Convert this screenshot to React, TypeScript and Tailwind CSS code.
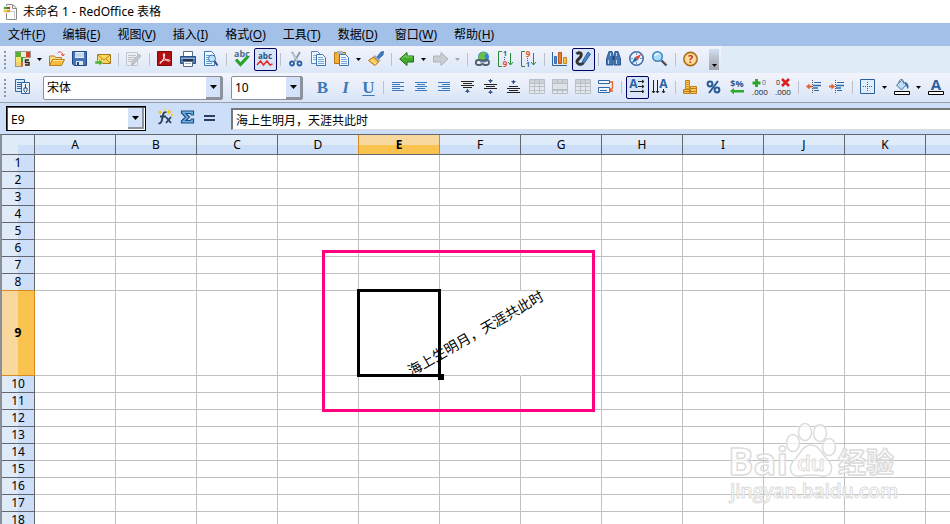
import type { ReactNode } from "react";
import clsx from "clsx";

const menus = [
  ["文件", "F"],
  ["编辑", "E"],
  ["视图", "V"],
  ["插入", "I"],
  ["格式", "O"],
  ["工具", "T"],
  ["数据", "D"],
  ["窗口", "W"],
  ["帮助", "H"],
];

const columns = ["A", "B", "C", "D", "E", "F", "G", "H", "I", "J", "K"];
const rows = Array.from({ length: 18 }, (_, i) => i + 1);

const tableIcon = (
  <>
    <path d="M.5.5h15v14H.5z" fill="#e4e7ec" stroke="#b9bfc9" />
    <path d="M1 1h14v3H1z" fill="#cdd1d8" />
    <path d="M1 4.500h14M1 7.500h14M1 11.500h14M5.500 1v14M10.500 1v14" stroke="#b9bfc9" fill="none" />
  </>
);

const icons: Record<string, ReactNode> = {
  new: (
    <>
      <path d="M0 0h16v16H0z" fill="#9a9a90" />
      <path d="M1 1h5v5H1z" fill="#5cae35" />
      <path d="M6 1h5v5H6z" fill="#e8efd8" />
      <path d="M11 1h4v5h-4z" fill="#d8402c" />
      <path d="M1 6h5v5H1z" fill="#f3e66a" />
      <path d="M6 6h4v5H6z" fill="#3a9a3a" />
      <path d="M10 6h5v3h-5z" fill="#f08a5c" />
      <path d="M1 11h5v4H1z" fill="#f0d070" />
      <path d="M6 11h3v4H6z" fill="#e06030" />
      <path d="M8 7h8v9H8z" fill="#e8e8e8" />
      <path d="M14 9h-3.500v2.500H14V14h-4" fill="none" stroke="#222" strokeWidth="1.400" />
    </>
  ),
  open: (
    <>
      <path d="M.5 14.500V5h5l1 1.500h6V9" fill="#f7dc8a" stroke="#b9801c" />
      <path d="M.5 14.500 3.500 8.500h12l-3 6z" fill="#f5bb3d" stroke="#b9801c" />
      <path d="M4 9.500h10" stroke="#fde6a4" />
      <path d="M8.500 2c2-2 5-1.500 5.500 2.500m-2-1.500 2 2 1.500-2" fill="none" stroke="#e0503c" />
    </>
  ),
  save: (
    <>
      <path d="M.5.5h14v14H2L.5 13z" fill="#4275b8" stroke="#244a86" />
      <path d="M3 1h9v6H3z" fill="#e6eef8" />
      <path d="M3 3h9M3 5h9" stroke="#a9c0dd" />
      <path d="M4 10h7v4H4z" fill="#dfe6f0" />
      <path d="M5 11h2v3H5z" fill="#244a86" />
    </>
  ),
  mail: (
    <>
      <path d="M2.500 3.500h13v9h-13z" fill="#fbd75c" stroke="#a5781c" />
      <path d="m3 4 6 5 6-5M3 12l4-4m8 4-4-4" fill="none" stroke="#b98a2c" />
      <path d="M0 10h4V8l4 3.500L4 15v-2H0z" fill="#4fae35" stroke="#e8f4e0" strokeWidth=".5" />
    </>
  ),
  edit: (
    <>
      <path d="M.5 1.500h11v13H.5z" fill="#eceef1" stroke="#c2c6cd" />
      <path d="M2 4.500h8M2 6.500h8M2 8.500h6M2 10.500h4" stroke="#bcc1c9" />
      <path d="m13 3 2 2-7 8-2.500 1 .5-3z" fill="#c4c7cc" stroke="#a8acb3" strokeWidth=".7" />
    </>
  ),
  pdf: (
    <>
      <path d="M.5.5h14v14H.5z" fill="#b40f10" stroke="#7d0a0a" />
      <path
        d="M3 12.500c2-1 5-7 4.500-9.500-1-1-1.500 0-1 2 1 3 4 6 6 5 1-1-1-1.500-3-1.300-2.500.3-5.500 1.300-6.500 2.800z"
        fill="none"
        stroke="#fff"
      />
    </>
  ),
  print: (
    <>
      <path d="M3.500.5h9v6h-9z" fill="#fff" stroke="#5a6b82" />
      <path d="M.5 5.500h15v7H.5z" fill="#4b7cb8" stroke="#284f83" />
      <path d="M1 7.500h14" stroke="#93b4dc" />
      <path d="M3 8h10v2H3z" fill="#24364f" />
      <path d="M3.500 10.500h9v5h-9z" fill="#fff" stroke="#5a6b82" />
      <path d="M5 12.500h6" stroke="#9db0c9" />
    </>
  ),
  preview: (
    <>
      <path d="M1.500.5h7l3 3v11h-10z" fill="#f4f9ff" stroke="#3f78b8" />
      <path d="M3 4.500h4M3 6.500h3M3 8.500h3M3 10.500h4M3 12.500h6" stroke="#6b9cd0" />
      <circle cx="9" cy="7.500" r="3.500" fill="#bfe2f8" stroke="#3f78b8" />
      <path d="m11.500 10 3 4.500" stroke="#34567f" strokeWidth="2" />
    </>
  ),
  spell: (
    <>
      <text x="8" y="6" textAnchor="middle" fontSize="9" fontWeight="700" fill="#4d6d90">abc</text>
      <path d="m2 8.500 4.500 5L14 5.500" fill="none" stroke="#27a527" strokeWidth="3.200" />
    </>
  ),
  autospell: (
    <>
      <text x="8" y="8" textAnchor="middle" fontSize="8" fontWeight="700" fill="#27507f">abc</text>
      <path d="m0 14 3.500-4 3 4L10 10l3 4 2.500-1" fill="none" stroke="#e02b2b" strokeWidth="1.500" />
    </>
  ),
  cut: (
    <>
      <path d="m4 1 6 10M12 1 6 11" stroke="#8d9bab" strokeWidth="2" />
      <path d="m4.500 2 5 8" stroke="#dfe6ee" />
      <circle cx="4" cy="12.500" r="2" fill="none" stroke="#2d62a8" strokeWidth="1.800" />
      <circle cx="11.500" cy="12.500" r="2" fill="none" stroke="#2d62a8" strokeWidth="1.800" />
    </>
  ),
  copy: (
    <>
      <path d="M.5.5h6l3 3v9h-9z" fill="#f2f8ff" stroke="#5287c4" />
      <path d="M2 4.500h4M2 6.500h4M2 8.500h4" stroke="#8ab0dc" />
      <path d="M5.500 3.500h6l3 3v8h-9z" fill="#f2f8ff" stroke="#3c74b5" />
      <path d="M7 6.500h5M7 8.500h6M7 10.500h6M7 12.500h6" stroke="#78a4d6" />
    </>
  ),
  paste: (
    <>
      <path d="M.5 1.500h11v11H.5z" fill="#f3b13a" stroke="#b67a1a" />
      <path d="M3 0h6v3H3z" fill="#aab5c4" />
      <path d="M5.500 3.500h6l3 3v8h-9z" fill="#f2f8ff" stroke="#3c74b5" />
      <path d="M7 6.500h5M7 8.500h6M7 10.500h6M7 12.500h6" stroke="#78a4d6" />
    </>
  ),
  brush: (
    <>
      <path d="m9 6 4-5 2.500-.5L15 4l-4.500 4z" fill="#3f7fc6" stroke="#1f4e8c" strokeWidth=".7" />
      <path d="m7 4.500 5 5-1.500 1.500L5.500 6z" fill="#a9b6c6" stroke="#60758f" strokeWidth=".5" />
      <path d="m5.500 6 5 5L7 14.500.5 9.500z" fill="#fbc84a" stroke="#b8691c" />
      <path d="m3 9 5 4" stroke="#fff0a0" />
    </>
  ),
  back: (
    <>
      <path d="M.7 8 8 1.500V5h6.500v6H8v3.500z" fill="#43ab2c" stroke="#1e6b17" />
      <path d="M3 7.500 7 4v2h6.500" fill="none" stroke="#8fd86c" />
    </>
  ),
  forward: <path d="M15 8 8 1.500V5H.5v6H8v3.500z" fill="#cacdd2" stroke="#adb1b8" />,
  link: (
    <>
      <circle cx="8.500" cy="6" r="5.500" fill="#2d86d8" />
      <path d="M4 4c2-3 5-4 8-2l-3 3 2 2-4 3-4-2z" fill="#6bc043" />
      <rect x=".8" y="9" width="6.500" height="5" rx="2.500" fill="none" stroke="#555f6b" strokeWidth="1.800" />
      <rect x="7.500" y="9" width="6.500" height="5" rx="2.500" fill="none" stroke="#555f6b" strokeWidth="1.800" />
      <path d="M5 11.500h5" stroke="#aab2bc" strokeWidth="1.500" />
    </>
  ),
  sortUp: (
    <>
      <path d="M4 .5H.5v15H4" fill="none" stroke="#2c8a3a" />
      <text x="7" y="5" textAnchor="middle" fontSize="7" fontWeight="700" fill="#2c5f9e">1</text>
      <path d="M6.500 6v4" stroke="#2c5f9e" strokeDasharray="1 1" />
      <text x="7" y="16" textAnchor="middle" fontSize="8" fontWeight="700" fill="#e0502c">9</text>
      <path d="M12.500 2v12m-2.500-3 2.500 3 2.500-3" fill="none" stroke="#2c8a3a" />
    </>
  ),
  sortDown: (
    <>
      <path d="M4 .5H.5v15H4" fill="none" stroke="#2c8a3a" />
      <text x="7" y="6" textAnchor="middle" fontSize="8" fontWeight="700" fill="#e0502c">9</text>
      <path d="M6.500 7v3" stroke="#2c5f9e" strokeDasharray="1 1" />
      <text x="7" y="16" textAnchor="middle" fontSize="7" fontWeight="700" fill="#2c5f9e">1</text>
      <path d="M12.500 2v12m-2.500-3 2.500 3 2.500-3" fill="none" stroke="#2c8a3a" />
    </>
  ),
  chart: (
    <>
      <path d="M.5 1v13.500H15" fill="none" stroke="#2f5f9c" />
      <path d="M2.500 5.500h2v7h-2z" fill="#4f93dc" stroke="#2f6cb0" />
      <path d="M6.500 1.500h3v11h-3z" fill="#f07d26" stroke="#b9541a" />
      <path d="M11.500 6.500h3v6h-3z" fill="#fac53d" stroke="#c28a1c" />
    </>
  ),
  draw: (
    <>
      <path d="M1.500 3C4 .5 7 2 6 5s-4.500 3.500-4 6 3.500 3 6 1.500" fill="none" stroke="#333" strokeWidth="3" />
      <path d="m13 1 2.500 2L9.500 12l-3 2 1-4z" fill="#4785cb" stroke="#1e4f8f" strokeWidth=".8" />
      <path d="m6.500 14 1-3 2 1.500z" fill="#333" />
    </>
  ),
  find: (
    <>
      <path d="M3 .5h3l1 4v9.500H.5V8z" fill="#4478b2" stroke="#28568d" />
      <path d="M12 .5H9l-1 4v9.500h6.500V8z" fill="#4478b2" stroke="#28568d" />
      <path d="M6.500 5h2v4h-2z" fill="#244a7c" />
      <path d="M2.500 9v4M10.500 9v4M4.500 2v3M10.500 2v3" stroke="#b5d2ef" />
    </>
  ),
  navigator: (
    <>
      <circle cx="7.500" cy="7.500" r="6.700" fill="#e8f3fd" stroke="#3f6fa9" strokeWidth="1.600" />
      <path d="M7.500 2v2m0 7v2M2 7.500h2m7 0h2" stroke="#6f95c2" />
      <path d="M12.500 3 9 9 6 6z" fill="#e14a30" />
      <path d="M2.500 12.500 6 6l3 3z" fill="#2f66ae" />
    </>
  ),
  zoom: (
    <>
      <circle cx="5.500" cy="5.500" r="4.800" fill="#a9dcf8" stroke="#3e84c4" strokeWidth="1.500" />
      <path d="M3 5c1-2 3-2.500 4-2" fill="none" stroke="#fff" strokeWidth="1.200" />
      <path d="m9.500 9.500 5 5" stroke="#4a4f57" strokeWidth="2.400" />
    </>
  ),
  help: (
    <>
      <circle cx="7.500" cy="8" r="6.700" fill="#fbc766" stroke="#a56a1a" strokeWidth="1.400" />
      <circle cx="7.500" cy="8" r="5" fill="#fde0a0" />
      <text x="7.500" y="12" textAnchor="middle" fontSize="11" fontWeight="700" fill="#c0382b">?</text>
    </>
  ),
  styles: (
    <>
      <path d="M.5.5h9v12h-9z" fill="#dcebfb" stroke="#2f66a8" />
      <path d="M2 3.500h6M2 5.500h6M2 7.500h5M2 9.500h5" stroke="#2f66a8" />
      <path d="M6.500 3.500h8v11h-8z" fill="#e9f3fd" stroke="#2f66a8" />
      <path d="M10.500 5v4m-1.500 0h3v3l-1.500 1.500L9 12z" fill="#fff" stroke="#274f80" />
    </>
  ),
  alignLeft: <path d="M1 3.500h12M1 5.500h8M1 7.500h12M1 9.500h8M1 11.500h12" stroke="#3a7bc0" />,
  alignCenter: <path d="M1 3.500h12M3 5.500h8M1 7.500h12M3 9.500h8M1 11.500h12" stroke="#3a7bc0" />,
  alignRight: <path d="M1 3.500h12M5 5.500h8M1 7.500h12M5 9.500h8M1 11.500h12" stroke="#3a7bc0" />,
  alignTop: (
    <>
      <path d="M1 2.500h13M3 4.500h9M1 6.500h13M3 8.500h9" stroke="#222" />
      <path d="M7.500 10v4" stroke="#36568a" />
      <path d="m5 13 2.500-3 2.500 3z" fill="#36568a" />
    </>
  ),
  alignMiddle: (
    <>
      <path d="M1 5.500h13M3 7.500h9M1 9.500h13" stroke="#222" />
      <path d="M7.500 0v4M7.500 11v4" stroke="#36568a" />
      <path d="m5 1 2.500 3L10 1zm0 13 2.500-3 2.500 3z" fill="#36568a" />
    </>
  ),
  alignBottom: (
    <>
      <path d="M3 7.500h9M1 9.500h13M3 11.500h9M1 13.500h13" stroke="#222" />
      <path d="M7.500 1v4" stroke="#36568a" />
      <path d="m5 2 2.500 3L10 2z" fill="#36568a" />
    </>
  ),
  merge: tableIcon,
  split: (
    <>
      {tableIcon}
      <path d="M.5 4.500h15v6H.5z" fill="#dfe2e7" stroke="#b9bfc9" />
    </>
  ),
  table: tableIcon,
  wrap: (
    <>
      <path d="M.5 1.500h11v3H.5zM.5 8.500h11v5H.5z" fill="#f0f6fe" stroke="#2f66a8" />
      <path d="M2 11.500h7" stroke="#2f66a8" />
      <path d="M12 3h2.500v6L12 12m0-3v3h3" fill="none" stroke="#e8662c" strokeWidth="1.300" />
    </>
  ),
  textHorizontal: (
    <>
      <text x="4.500" y="9" textAnchor="middle" fontSize="12" fontWeight="700" fill="#2a62a6">A</text>
      <path d="M9 2.500h6M9 7.500h6M1 12.500h14M13 1l2 1.500L13 4m0 2 2 1.500L13 9m0 2 2 1.500-2 1.500" fill="none" stroke="#222" />
    </>
  ),
  textVertical: (
    <>
      <text x="11.500" y="9" textAnchor="middle" fontSize="12" fontWeight="700" fill="#2a62a6">A</text>
      <path d="M1.500 1v13m4-13v13m6-4v4M0 12l1.500 2L3 12m1 0 1.500 2L7 12m3 0 1.500 2 1.500-2" fill="none" stroke="#222" />
    </>
  ),
  currency: (
    <>
      <path d="M2.500 1.500h4v12h-4z" fill="#fbc650" stroke="#bf7e1d" />
      <path d="M2 3.500h5M2 5.500h5M2 7.500h5M2 9.500h5" stroke="#d9982c" />
      <path d="M7.500 7.500h6v7h-6zM.5 10.500h6v4h-6z" fill="#fbc650" stroke="#bf7e1d" />
      <path d="M7 9.500h7M1 12.500h13" stroke="#bf7e1d" />
    </>
  ),
  percent: (
    <>
      <circle cx="4" cy="5" r="2.400" fill="none" stroke="#285a97" strokeWidth="2" />
      <circle cx="11" cy="11" r="2.400" fill="none" stroke="#285a97" strokeWidth="2" />
      <path d="M12 2 3 14" stroke="#285a97" strokeWidth="2" />
    </>
  ),
  standard: (
    <>
      <text x="8" y="8" textAnchor="middle" fontSize="9" fontWeight="700" fill="#285a97">$%</text>
      <path d="M1 12 5 9v2h10v2.500H5v2z" fill="#2bad2b" />
    </>
  ),
  addDecimal: (
    <>
      <path d="M4.500 0v8M.5 4h8" stroke="#2aa52a" strokeWidth="2.800" />
      <text x="12" y="6" textAnchor="middle" fontSize="7" fill="#3a6ea8">0</text>
      <text x="8" y="16" textAnchor="middle" fontSize="8" fill="#222">.000</text>
    </>
  ),
  deleteDecimal: (
    <>
      <text x="3" y="6" textAnchor="middle" fontSize="7" fill="#222">0</text>
      <path d="m7 0 7 7m0-7L7 7" stroke="#d8201c" strokeWidth="2.600" />
      <text x="8" y="16" textAnchor="middle" fontSize="8" fill="#222">.000</text>
    </>
  ),
  outdent: (
    <>
      <path d="M8 3.500h7M8 11.500h5" stroke="#2d6bab" />
      <path d="M7 6.500h8M7 9h5" stroke="#2d6bab" strokeWidth="1.600" />
      <path d="M6.500 1v14" stroke="#555" strokeDasharray="1 1" />
      <path d="m0 7.500 3.500-3v2H6v2H3.500v2z" fill="#e8602c" />
    </>
  ),
  indent: (
    <>
      <path d="M8 3.500h7M8 11.500h5" stroke="#2d6bab" />
      <path d="M7 6.500h8M7 9h5" stroke="#2d6bab" strokeWidth="1.600" />
      <path d="M6.500 1v14" stroke="#555" strokeDasharray="1 1" />
      <path d="m6 7.500-3.500-3v2H0v2h2.500v2z" fill="#e8602c" />
    </>
  ),
  borders: (
    <>
      <path d="M.5.5h14v14H.5z" fill="#dfeefc" stroke="#2c5f9e" />
      <path d="M7.500 3v10M3 7.500h10" stroke="#2c5f9e" strokeDasharray="1 1" />
    </>
  ),
  fill: (
    <>
      <path d="m2.500 6 5-4.500 5 4-5 5.500z" fill="#c6dcf2" stroke="#3a71ac" />
      <path d="M5 4c0-5 5-5 5 1" fill="none" stroke="#5a6f88" />
      <path d="M11 3c4 1 4 5 3 7-1.500-1-1.500-4-3-5z" fill="#2d6cb5" />
      <path d="M.5 12.500h15v3H.5z" fill="#fff" stroke="#000" />
    </>
  ),
  fontColor: (
    <>
      <text x="8" y="11" textAnchor="middle" fontSize="15" fontWeight="700" fill="#2c5f9e">A</text>
      <path d="M.5 12.500h15v3H.5z" fill="#fff" stroke="#000" />
    </>
  ),
  formula: (
    <>
      <path d="M9.500 3.500c-3-1.500-3.500 2-4 5s-1.500 7-4 5.500M3 7.500h6" fill="none" stroke="#27405f" strokeWidth="1.800" />
      <path d="m9 8 5 6m0-6-5 6" stroke="#27405f" strokeWidth="1.800" />
      <path d="m3 1 1 1.500L5.500 3 4 4 3 5.500 2 4 .5 3 2 2.500zm9-1 1 2 2 1-2 1-1 2-1-2-2-1 2-1z" fill="#f6c422" />
      <path d="M14 5h2v2h-2zM7 0h1v1H7z" fill="#f6c422" />
    </>
  ),
  sum: (
    <path
      d="M1.500 2h12v4h-2l-1-1.500H6L9.500 8 6 11.500h4.500l1-1.500h2v4h-12v-2l4-4-4-4z"
      fill="#69b2e6"
      stroke="#1e4d84"
      strokeWidth="1.200"
    />
  ),
  equals: <path d="M1 7h11M1 11h11" stroke="#2b3f5c" strokeWidth="2" />,
};

function Icon({ name }: { name: string }) {
  return (
    <svg viewBox="0 0 16 16" className="size-4 shrink-0 overflow-visible font-['Open_Sans',sans-serif]" aria-hidden="true">
      {icons[name]}
    </svg>
  );
}

function Arrow({ small, muted }: { small?: boolean; muted?: boolean }) {
  return (
    <svg
      viewBox="0 0 7 4"
      className={clsx("shrink-0", small ? "h-[3px] w-[5px]" : "h-1 w-[7px]", muted ? "fill-[#a3a6ab]" : "fill-black")}
      aria-hidden="true"
    >
      <path d="M0 0h7L3.500 4z" />
    </svg>
  );
}

function Tool({ icon, active }: { icon: string; active?: boolean }) {
  return (
    <button
      type="button"
      aria-label={icon}
      aria-pressed={active}
      className={clsx(
        "flex h-[23px] w-[23px] shrink-0 rounded-xs border pt-0.5 pl-0.5",
        active ? "border-[#000060] bg-[#d8e5f8]" : "border-transparent"
      )}
    >
      <Icon name={icon} />
    </button>
  );
}

function StyleTool({ letter, className }: { letter: string; className?: string }) {
  return (
    <button
      type="button"
      className={clsx(
        "h-[23px] w-[23px] shrink-0 text-center font-['Liberation_Serif',serif] text-[17px] leading-[22px] font-bold text-[#3f7ab8]",
        className
      )}
    >
      {letter}
    </button>
  );
}

function Drop({ muted }: { muted?: boolean }) {
  return (
    <button type="button" aria-label="options" className="flex h-[23px] w-[11px] shrink-0 items-center pl-0.5">
      <Arrow small muted={muted} />
    </button>
  );
}

function Sep() {
  return (
    <span className="flex h-[23px] w-2 shrink-0 items-center pl-[3px]">
      <span className="h-[13px] w-px bg-[#bcc0c8]" />
    </span>
  );
}

function Handle() {
  return (
    <span className="flex w-3 shrink-0 flex-col gap-0.5 pt-[3px] pl-1">
      {[0, 1, 2, 3, 4].map((dot) => (
        <span key={dot} className="size-0.5 bg-[#8f949e]" />
      ))}
    </span>
  );
}

function ArrowBox() {
  return (
    <span className="pointer-events-none absolute inset-y-px right-px flex w-4 items-center justify-center border-r-2 border-b-2 border-[#8d949f] bg-[#d3e2f9]">
      <Arrow />
    </span>
  );
}

function Combo({ label, value, className }: { label: string; value: string; className: string }) {
  return (
    <label className={clsx("relative h-6 shrink-0", className)}>
      <select
        aria-label={label}
        className="block h-full w-full appearance-none rounded-xs border border-[#8b9098] bg-white pl-[3px] text-xs outline-none"
      >
        <option>{value}</option>
      </select>
      <ArrowBox />
    </label>
  );
}

function TitleBar() {
  return (
    <header className="flex h-[23px] shrink-0 items-center gap-1.5 bg-white pl-[3px]">
      <svg viewBox="0 0 14 16" className="h-4 w-3.5" aria-hidden="true">
        <path d="M3.500.5h6l4 3.500v11.500h-10z" fill="#fff" stroke="#8a8a8a" />
        <path d="M9.500 1v3.500h4" fill="none" stroke="#8a8a8a" />
        <path d="M5.500 7.500h6v7" fill="none" stroke="#c4c4c4" />
        <path d="M0 2h8v7H0z" fill="#e9e9df" />
        <path d="M1 3h3v2H1z" fill="#50a834" />
        <path d="M4 3h3v2H4z" fill="#d8342c" />
        <path d="M1 6h3v2H1z" fill="#f0cf3c" />
        <path d="M4 6h3v2H4z" fill="#e98d2c" />
      </svg>
      <h1 className="text-xs">未命名 1 - RedOffice 表格</h1>
    </header>
  );
}

function MenuBar() {
  return (
    <nav className="flex h-[23px] shrink-0 items-center bg-[#a3c1e8]">
      {menus.map(([name, key]) => (
        <button key={key} type="button" className="shrink-0 pr-[9px] pl-2 text-xs">
          {name}(<span className="underline underline-offset-2">{key}</span>)
        </button>
      ))}
    </nav>
  );
}

function StandardBar() {
  return (
    <div className="flex h-[27px] shrink-0 overflow-hidden bg-[#dfebf7]">
      <div className="flex shrink-0 items-start bg-linear-to-b from-[#f3f4fb] to-[#dbe7f8] pt-0.5 pr-0.5">
        <Handle />
        <Tool icon="new" />
        <Drop />
        <Tool icon="open" />
        <Tool icon="save" />
        <Tool icon="mail" />
        <Sep />
        <Tool icon="edit" />
        <Sep />
        <Tool icon="pdf" />
        <Tool icon="print" />
        <Tool icon="preview" />
        <Sep />
        <Tool icon="spell" />
        <Tool icon="autospell" active />
        <Sep />
        <Tool icon="cut" />
        <Tool icon="copy" />
        <Tool icon="paste" />
        <Drop />
        <Tool icon="brush" />
        <Sep />
        <Tool icon="back" />
        <Drop />
        <Tool icon="forward" />
        <Drop muted />
        <Sep />
        <Tool icon="link" />
        <Tool icon="sortUp" />
        <Tool icon="sortDown" />
        <Sep />
        <Tool icon="chart" />
        <Tool icon="draw" active />
        <Sep />
        <Tool icon="find" />
        <Tool icon="navigator" />
        <Tool icon="zoom" />
        <Sep />
        <Tool icon="help" />
        <button
          type="button"
          aria-label="more"
          className="mt-px ml-1.5 flex h-[21px] w-2.5 items-end justify-center bg-linear-to-b from-[#cfe0f8] via-[#b9bdc6] to-[#a2a5ab] pb-[3px]"
        >
          <Arrow small />
        </button>
      </div>
    </div>
  );
}

function FormatBar() {
  return (
    <div className="flex h-[30px] shrink-0 items-start overflow-hidden border-b border-[#9aa0aa] bg-linear-to-b from-[#f3f4fb] to-[#d9e5f8] pt-[3px]">
      <Handle />
      <Tool icon="styles" />
      <Combo label="font" value="宋体" className="mx-2 w-[180px]" />
      <Combo label="size" value="10" className="mr-2 w-[72px]" />
      <StyleTool letter="B" />
      <StyleTool letter="I" className="italic" />
      <StyleTool letter="U" className="underline underline-offset-2" />
      <Sep />
      <Tool icon="alignLeft" />
      <Tool icon="alignCenter" />
      <Tool icon="alignRight" />
      <Tool icon="alignTop" />
      <Tool icon="alignMiddle" />
      <Tool icon="alignBottom" />
      <Tool icon="merge" />
      <Tool icon="split" />
      <Tool icon="table" />
      <Tool icon="wrap" />
      <Sep />
      <Tool icon="textHorizontal" active />
      <Tool icon="textVertical" />
      <Sep />
      <Tool icon="currency" />
      <Tool icon="percent" />
      <Tool icon="standard" />
      <Tool icon="addDecimal" />
      <Tool icon="deleteDecimal" />
      <Sep />
      <Tool icon="outdent" />
      <Tool icon="indent" />
      <Sep />
      <Tool icon="borders" />
      <Drop />
      <Tool icon="fill" />
      <Drop />
      <Tool icon="fontColor" />
    </div>
  );
}

function FormulaBar() {
  return (
    <div className="flex h-[31px] shrink-0 items-start bg-[#cddff8] pt-[3px] pl-1.5">
      <label className="relative h-[25px] w-[140px] shrink-0 border border-black">
        <input
          aria-label="cell"
          defaultValue="E9"
          className="block h-full w-full border-t border-l border-[#555] bg-white pl-[3px] text-xs outline-none"
        />
        <ArrowBox />
      </label>
      <div className="mx-2 flex shrink-0">
        <Tool icon="formula" />
        <Tool icon="sum" />
        <Tool icon="equals" />
      </div>
      <input
        aria-label="formula"
        defaultValue="海上生明月，天涯共此时"
        className="mt-0.5 h-[22px] min-w-0 flex-1 border-t-2 border-b border-l-2 border-t-[#777] border-b-[#dcdcdc] border-l-[#777] bg-white pl-[3px] text-xs outline-none"
      />
    </div>
  );
}

function Cell({ row, col }: { row: number; col: string }) {
  const selected = row === 9 && col === "E";
  return (
    <td
      className={clsx(
        "relative border-r border-b border-[#c0c0c0] p-0",
        row === 9 && col === "F" && "border-r-transparent"
      )}
    >
      {selected && (
        <>
          <span className="absolute -bottom-0.5 left-[53px] z-10 origin-bottom-left -rotate-30 font-['Noto_Sans_CJK_SC',sans-serif] text-sm leading-[14px] whitespace-nowrap">
            海上生明月，天涯共此时
          </span>
          <span className="absolute -inset-0.5 z-20 border-3 border-black" />
          <span className="absolute -right-[5px] -bottom-[5px] z-20 size-1.5 bg-black" />
        </>
      )}
    </td>
  );
}

function Sheet() {
  return (
    <table className="w-full table-fixed border-separate border-spacing-0 text-center text-xs leading-4">
      <colgroup>
        <col className="w-[33px]" />
        {columns.map((col) => (
          <col key={col} className="w-[81px]" />
        ))}
        <col />
      </colgroup>
      <thead>
        <tr className="h-5">
          <td className="border-r border-b border-[#62676f] bg-[#e0ebf9] p-0">
            <div className="mt-2.5 ml-4 h-[9px] bg-[#cddff8]" />
          </td>
          {columns.map((col) => (
            <th
              key={col}
              className={clsx(
                "border-r border-b p-0",
                col === "E"
                  ? "border-[#d98a1e] border-b-[#62676f] bg-linear-to-b from-[#f9d8a0] from-50% to-[#fac350] to-50% font-bold"
                  : "border-[#62676f] bg-linear-to-b from-[#e0ebf9] from-50% to-[#cddff8] to-50% font-normal",
                col === "D" && "border-r-[#d98a1e]"
              )}
            >
              {col}
            </th>
          ))}
          <th className="border-b border-[#62676f] bg-linear-to-b from-[#e0ebf9] from-50% to-[#cddff8] to-50% p-0" />
        </tr>
      </thead>
      <tbody>
        {rows.map((row) => (
          <tr key={row} className={row === 9 ? "h-[85px]" : "h-[17px]"}>
            <th
              className={clsx(
                "border-r border-b p-0",
                row === 9
                  ? "border-[#d98a1e] bg-linear-to-r from-[#f9d8a0] from-50% to-[#fac350] to-50% font-bold"
                  : "border-[#62676f] bg-linear-to-r from-[#e0ebf9] from-50% to-[#cddff8] to-50% font-normal",
                row === 8 && "border-b-[#d98a1e]"
              )}
            >
              {row}
            </th>
            {columns.map((col) => (
              <Cell key={col} row={row} col={col} />
            ))}
            <td className="border-b border-[#c0c0c0] p-0" />
          </tr>
        ))}
      </tbody>
    </table>
  );
}

function Watermark() {
  return (
    <svg
      viewBox="0 0 180 90"
      className="pointer-events-none absolute top-[284px] left-[722px] z-30 h-[90px] w-[180px] overflow-visible font-['Open_Sans','Noto_Sans_CJK_SC',sans-serif]"
      fill="#fff"
      fillOpacity=".7"
      stroke="#dcdcdc"
      strokeWidth="1.500"
      strokeLinejoin="round"
    >
      <ellipse cx="69" cy="24" rx="6.500" ry="8.500" />
      <ellipse cx="81" cy="13" rx="6.500" ry="8.500" />
      <ellipse cx="96" cy="14" rx="6.500" ry="8.500" />
      <ellipse cx="105" cy="28" rx="6.500" ry="8.500" />
      <path d="M87 26c8 0 10 8 16 14 8 8 5 18-5 17-6-1-16-1-22 0-10 1-13-9-5-17 6-6 8-14 16-14z" />
      <text x="4" y="56" fontSize="38" fontWeight="700">Bai</text>
      <text x="87" y="52" fontSize="22" fontWeight="600" strokeWidth="1" textAnchor="middle">du</text>
      <text x="114" y="54" fontSize="28" fontWeight="700">经验</text>
      <text x="6" y="79" fontSize="19" fontWeight="600" strokeWidth="1">jingyan.baidu.com</text>
    </svg>
  );
}

export default function App() {
  return (
    <div className="flex h-screen flex-col overflow-hidden bg-white font-['Noto_Sans','Noto_Sans_CJK_SC',sans-serif] text-black">
      <TitleBar />
      <MenuBar />
      <StandardBar />
      <FormatBar />
      <FormulaBar />
      <main className="relative min-h-0 flex-1 overflow-hidden border-t border-l-2 border-t-[#62676f] border-l-[#8b9098]">
        <Sheet />
        <div className="pointer-events-none absolute top-[115px] left-80 z-30 h-[162px] w-[273px] border-3 border-[#ff0080]" />
        <Watermark />
      </main>
    </div>
  );
}
